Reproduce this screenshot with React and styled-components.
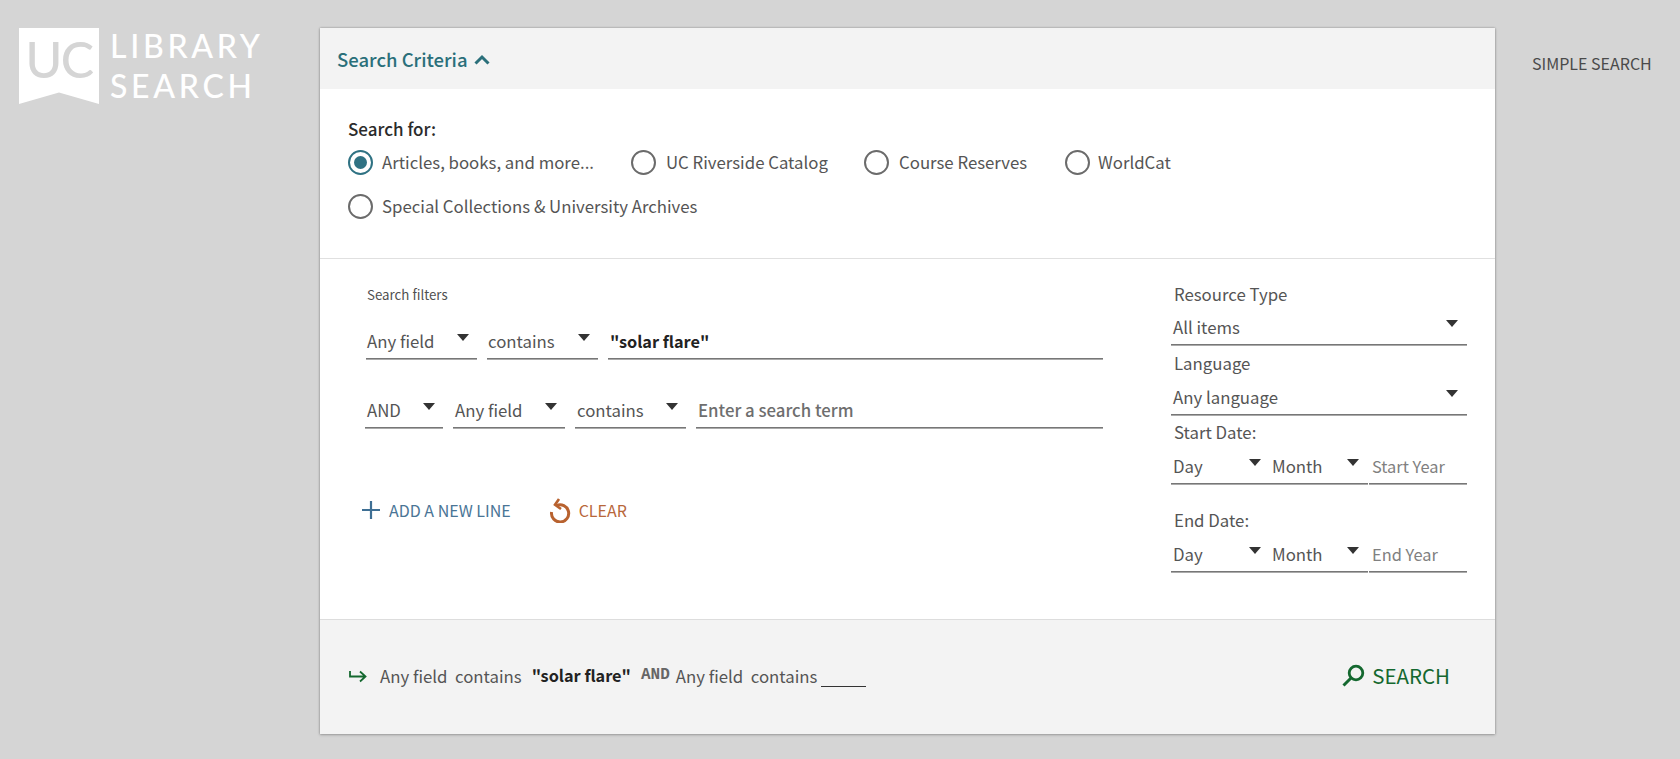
import React from 'react';
import styled, { createGlobalStyle } from 'styled-components';

const FONT = '"Noto Sans CJK SC", "Noto Sans", sans-serif';

const Global = createGlobalStyle`
  html, body { margin: 0; padding: 0; }
  body { background: #d5d5d5; font-family: ${FONT}; }
`;

const Page = styled.div`
  width: 1680px;
  height: 759px;
  overflow: hidden;
  display: flex;
  align-items: flex-start;
  padding-top: 28px;
  box-sizing: border-box;
  background: #d5d5d5;
`;

const Brand = styled.div`
  width: 320px;
  flex: none;
  display: flex;
  padding-left: 19px;
  box-sizing: border-box;
`;

const Shield = styled.div`
  width: 80px;
  height: 76px;
  background: #fff;
  clip-path: polygon(0 0, 100% 0, 100% 100%, 50% 85%, 0 100%);
  color: #d5d5d5;
  font: 500 50px/62px "Lato", sans-serif;
  letter-spacing: -1.6px;
  text-align: center;
`;

const BrandText = styled.div`
  margin-left: 11px;
  color: #fff;
  font: 500 32px/39.5px "Lato", sans-serif;
  letter-spacing: 3.7px;
  margin-top: -2px;
`;

const Card = styled.main`
  width: 1175px;
  height: 706px;
  flex: none;
  background: #fff;
  box-shadow: 0 0 2px rgba(0,0,0,.3), 0 1px 3px rgba(0,0,0,.2);
  display: flex;
  flex-direction: column;
`;

const CardHeader = styled.header`
  height: 61px;
  flex: none;
  box-sizing: border-box;
  background: #f3f3f3;
  display: flex;
  align-items: center;
  padding: 1px 0 0 17px;
  gap: 6px;
  color: #2a6f7a;
  font-size: 18.5px;
  font-weight: 500;
`;

const Scope = styled.section`
  height: 170px;
  flex: none;
  box-sizing: border-box;
  padding: 28px 28px 0;
  border-bottom: 1px solid #e0e0e0;
`;

const ScopeTitle = styled.div`
  font-size: 17px;
  line-height: 24px;
  font-weight: 500;
  color: #2b2b2b;
`;

const RadioRow = styled.div`
  display: flex;
  height: 44px;
  align-items: center;
  margin-top: ${p => p.$first ? '-1px' : '0'};
`;

const RadioItem = styled.label`
  display: flex;
  align-items: center;
  width: ${p => p.$w}px;
  flex: none;
  font-size: 16.8px;
  color: #555;
  white-space: nowrap;
`;

const RadioMark = styled.span`
  width: 25px;
  height: 25px;
  box-sizing: border-box;
  border-radius: 50%;
  border: 2px solid ${p => p.$on ? '#2f7283' : '#6b6b6b'};
  margin-right: ${p => p.$gap || 10}px;
  flex: none;
  display: flex;
  align-items: center;
  justify-content: center;
  &::after {
    content: '';
    display: ${p => p.$on ? 'block' : 'none'};
    width: 13px;
    height: 13px;
    border-radius: 50%;
    background: #2f7283;
  }
`;

const Filters = styled.section`
  flex: 1;
  display: flex;
`;

const LeftCol = styled.div`
  width: 851px;
  flex: none;
  box-sizing: border-box;
  padding: 27px 0 0 45px;
`;

const FilterTitle = styled.div`
  font-size: 13.3px;
  line-height: 18px;
  color: #505050;
  margin-left: 2px;
`;

const QueryRow = styled.div`
  display: flex;
  gap: 10px;
  height: 45px;
  margin-top: ${p => p.$mt}px;
  padding-left: ${p => p.$pl || 0}px;
`;

const Select = styled.div`
  width: ${p => p.$w}px;
  flex: none;
  height: ${p => p.$h || 45}px;
  box-sizing: border-box;
  border-bottom: 1px solid #777;
  box-shadow: 0 1px 0 #aaa;
  display: flex;
  align-items: center;
  justify-content: space-between;
  padding: ${p => p.$pt ?? 9}px ${p => p.$pr ?? 8}px 0 ${p => p.$pl ?? 2}px;
  font-size: 16.8px;
  color: #555;
`;

const Caret = styled.span`
  width: 0;
  height: 0;
  border-left: 6.5px solid transparent;
  border-right: 6.5px solid transparent;
  border-top: 7px solid #333;
  margin-top: -6px;
`;

const InputBox = styled.div`
  flex: ${p => p.$w ? 'none' : 1};
  width: ${p => p.$w ? `${p.$w}px` : 'auto'};
  height: ${p => p.$h || 45}px;
  box-sizing: border-box;
  border-bottom: 1px solid #777;
  box-shadow: 0 1px 0 #aaa;
  display: flex;
  align-items: center;
  padding: ${p => p.$pt ?? 9}px 0 0 ${p => p.$pl ?? 2}px;
  font-size: ${p => p.$fs || 16.8}px;
  font-weight: ${p => p.$weight || 400};
  color: ${p => p.$color || '#555'};
`;

const Query = styled.div`
  width: 738px;
`;

const Actions = styled.div`
  display: flex;
  align-items: center;
  margin-top: 67px;
  margin-left: -3px;
  height: 30px;
`;

const ActionButton = styled.div`
  display: flex;
  align-items: center;
  color: ${p => p.$color};
  font-size: 16px;
  text-transform: uppercase;
  margin-right: ${p => p.$mr || 0}px;
  gap: ${p => p.$gap}px;
`;

const RightCol = styled.div`
  width: 296px;
  flex: none;
  padding-top: 23px;
`;

const FieldLabel = styled.div`
  font-size: 16.8px;
  line-height: 24px;
  box-sizing: border-box;
  height: ${p => p.$h || 24}px;
  padding-top: ${p => p.$pt || 0}px;
  color: #555;
  padding-left: 3px;
`;

const DateRow = styled.div`
  display: flex;
  gap: 1px;
  margin-bottom: ${p => p.$mb || 0}px;
`;

const DatePart = styled.div`
  display: flex;
  align-items: center;
  justify-content: space-between;
  font-size: 16.8px;
  color: #555;
  width: ${p => p.$w}px;
  padding-right: ${p => p.$pr}px;
  box-sizing: border-box;
`;

const DateSelect = styled.div`
  width: 197px;
  flex: none;
  height: 36px;
  box-sizing: border-box;
  border-bottom: 1px solid #777;
  box-shadow: 0 1px 0 #aaa;
  display: flex;
  align-items: center;
  padding-left: 2px;
`;

const CardFooter = styled.footer`
  height: 115px;
  flex: none;
  box-sizing: border-box;
  background: #f3f3f3;
  border-top: 1px solid #ddd;
  display: flex;
  align-items: center;
  padding: 0 45px 2px 29px;
  font-size: 16.8px;
  color: #555;
`;

const Sentence = styled.div`
  display: flex;
  align-items: center;
  flex: 1;
  white-space: pre;
`;

const Bold = styled.span`
  font-weight: 700;
  font-size: 16.3px;
  color: #222;
  margin: -2px 10px 0 10px;
`;

const Operator = styled.span`
  font: 700 16px "Liberation Mono", monospace;
  color: #666;
  margin-right: 6px;
  margin-top: -3px;
`;

const Blank = styled.span`
  width: 45px;
  height: 1px;
  background: #333;
  margin: 21px 0 0 4px;
  align-self: center;
`;

const SearchButton = styled.div`
  display: flex;
  align-items: center;
  gap: 7px;
  color: #14682f;
  font-size: 20.5px;
  margin-top: -2px;
`;

const SimpleLink = styled.a`
  margin: 25px 0 0 37px;
  font-size: 16px;
  line-height: 20px;
  color: #4a4a4a;
  white-space: nowrap;
`;

const TypeIcon = styled.svg`
  flex: none;
  display: block;
  margin: ${p => p.$m || 0};
`;

export default function App() {
  return (
    <Page>
      <Global />
      <Brand>
        <Shield>UC</Shield>
        <BrandText>LIBRARY<br />SEARCH</BrandText>
      </Brand>
      <Card>
        <CardHeader>
          Search Criteria
          <TypeIcon width="16" height="11" viewBox="0 0 16 11" fill="none" stroke="#2a6f7a" strokeWidth="3">
            <path d="M1.5 9.5 L8 3 L14.5 9.5" />
          </TypeIcon>
        </CardHeader>
        <Scope>
          <ScopeTitle>Search for:</ScopeTitle>
          <RadioRow $first>
            <RadioItem $w={283}><RadioMark $on $gap={9} />Articles, books, and more...</RadioItem>
            <RadioItem $w={233}><RadioMark />UC Riverside Catalog</RadioItem>
            <RadioItem $w={201}><RadioMark />Course Reserves</RadioItem>
            <RadioItem $w={150}><RadioMark $gap={8} />WorldCat</RadioItem>
          </RadioRow>
          <RadioRow>
            <RadioItem $w={400}><RadioMark $gap={9} />Special Collections &amp; University Archives</RadioItem>
          </RadioRow>
        </Scope>
        <Filters>
          <LeftCol>
            <FilterTitle>Search filters</FilterTitle>
            <Query>
              <QueryRow $mt={10} $pl={1}>
                <Select $w={111} $pl={1}>Any field<Caret /></Select>
                <Select $w={111} $pl={1}>contains<Caret /></Select>
                <InputBox $weight={700} $fs={16.3} $color="#222">"solar flare"</InputBox>
              </QueryRow>
              <QueryRow $mt={24}>
                <Select $w={78}>AND<Caret /></Select>
                <Select $w={112}>Any field<Caret /></Select>
                <Select $w={111}>contains<Caret /></Select>
                <InputBox $weight={500} $color="#6e6e6e">Enter a search term</InputBox>
              </QueryRow>
            </Query>
            <Actions>
              <ActionButton $color="#4a7596" $gap={9} $mr={38}>
                <TypeIcon width="18" height="18" viewBox="0 0 18 18" stroke="#3e6f94" strokeWidth="2.2" fill="none">
                  <path d="M9 0 V18 M0 9 H18" />
                </TypeIcon>
                Add a new line
              </ActionButton>
              <ActionButton $color="#b8673a" $gap={8}>
                <TypeIcon width="22" height="25" viewBox="0 0 22 25" fill="none" stroke="#b8622f" strokeWidth="3">
                  <path d="M7.5 7.6 A8.6 8.6 0 1 1 2.6 14" />
                  <path d="M10 1 L6 6.8 L12 11" strokeWidth="2.6" />
                </TypeIcon>
                Clear
              </ActionButton>
            </Actions>
          </LeftCol>
          <RightCol>
            <FieldLabel $h={27}>Resource Type</FieldLabel>
            <Select $w={296} $h={36} $pt={0} $pr={9}>All items<Caret /></Select>
            <FieldLabel $h={34} $pt={6}>Language</FieldLabel>
            <Select $w={296} $h={36} $pt={0} $pr={9}>Any language<Caret /></Select>
            <FieldLabel $h={33} $pt={5}>Start Date:</FieldLabel>
            <DateRow $mb={24}>
              <DateSelect>
                <DatePart $w={99} $pr={11}>Day<Caret /></DatePart>
                <DatePart $w={87} $pr={0}>Month<Caret /></DatePart>
              </DateSelect>
              <InputBox $w={98} $h={36} $pt={0} $pl={3} $fs={16.4} $color="#808080">Start Year</InputBox>
            </DateRow>
            <FieldLabel $h={28}>End Date:</FieldLabel>
            <DateRow>
              <DateSelect>
                <DatePart $w={99} $pr={11}>Day<Caret /></DatePart>
                <DatePart $w={87} $pr={0}>Month<Caret /></DatePart>
              </DateSelect>
              <InputBox $w={98} $h={36} $pt={0} $pl={3} $fs={16.4} $color="#808080">End Year</InputBox>
            </DateRow>
          </RightCol>
        </Filters>
        <CardFooter>
          <Sentence>
            <TypeIcon $m="0 13px 0 0" width="18" height="13" viewBox="0 0 18 13" fill="none" stroke="#14682f" strokeWidth="1.8">
              <path d="M1 1 V6.5 H16 M11 1.5 L16.5 6.5 L11 11.5" />
            </TypeIcon>
            {'Any field  contains'}
            <Bold>"solar flare"</Bold>
            <Operator>AND</Operator>
            {'Any field  contains'}
            <Blank />
          </Sentence>
          <SearchButton>
            <TypeIcon width="23" height="23" viewBox="0 0 23 23" fill="none" stroke="#14682f">
              <circle cx="14" cy="9" r="6.8" strokeWidth="2.8" />
              <path d="M9 14 L1.5 21.5" strokeWidth="3" />
            </TypeIcon>
            SEARCH
          </SearchButton>
        </CardFooter>
      </Card>
      <SimpleLink>SIMPLE SEARCH</SimpleLink>
    </Page>
  );
}
